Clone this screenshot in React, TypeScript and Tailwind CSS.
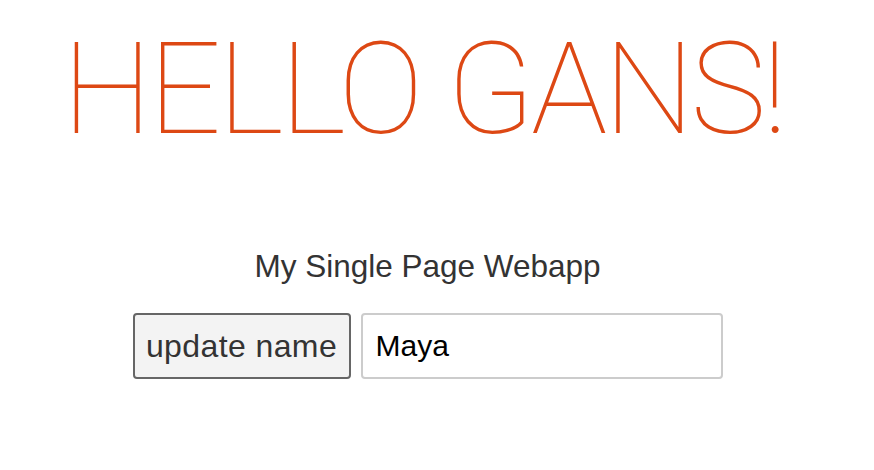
import { useState } from 'react';

export default function App() {
  const [name, setName] = useState('Maya');

  return (
    <div className="w-[874px] h-[470px] bg-white flex flex-col items-center pr-[19px]" style={{ fontFamily: '"Liberation Sans", Arial, sans-serif' }}>
      <h1
        className="mt-[14px] mr-[9px] text-[128px] leading-[150px] font-thin text-[#dd4814] tracking-[-3.7px] whitespace-nowrap"
        style={{ fontFamily: 'Roboto, sans-serif' }}
      >
        HELLO GANS!
      </h1>
      <p className="mt-[84px] text-[31.5px] leading-[36px] text-[#333333]">My Single Page Webapp</p>
      <div className="mt-[29px] flex items-center gap-[10px]">
        <button className="w-[218px] h-[66px] border-2 border-[#666666] rounded-[4px] bg-[#f3f3f3] text-[32px] tracking-[0.4px] text-[#333333]">
          update name
        </button>
        <input
          value={name}
          onChange={(e) => setName(e.target.value)}
          className="w-[362px] h-[66px] border-2 border-[#cccccc] rounded-[4px] bg-white px-[13px] text-[30px] text-black outline-none"
        />
      </div>
    </div>
  );
}
